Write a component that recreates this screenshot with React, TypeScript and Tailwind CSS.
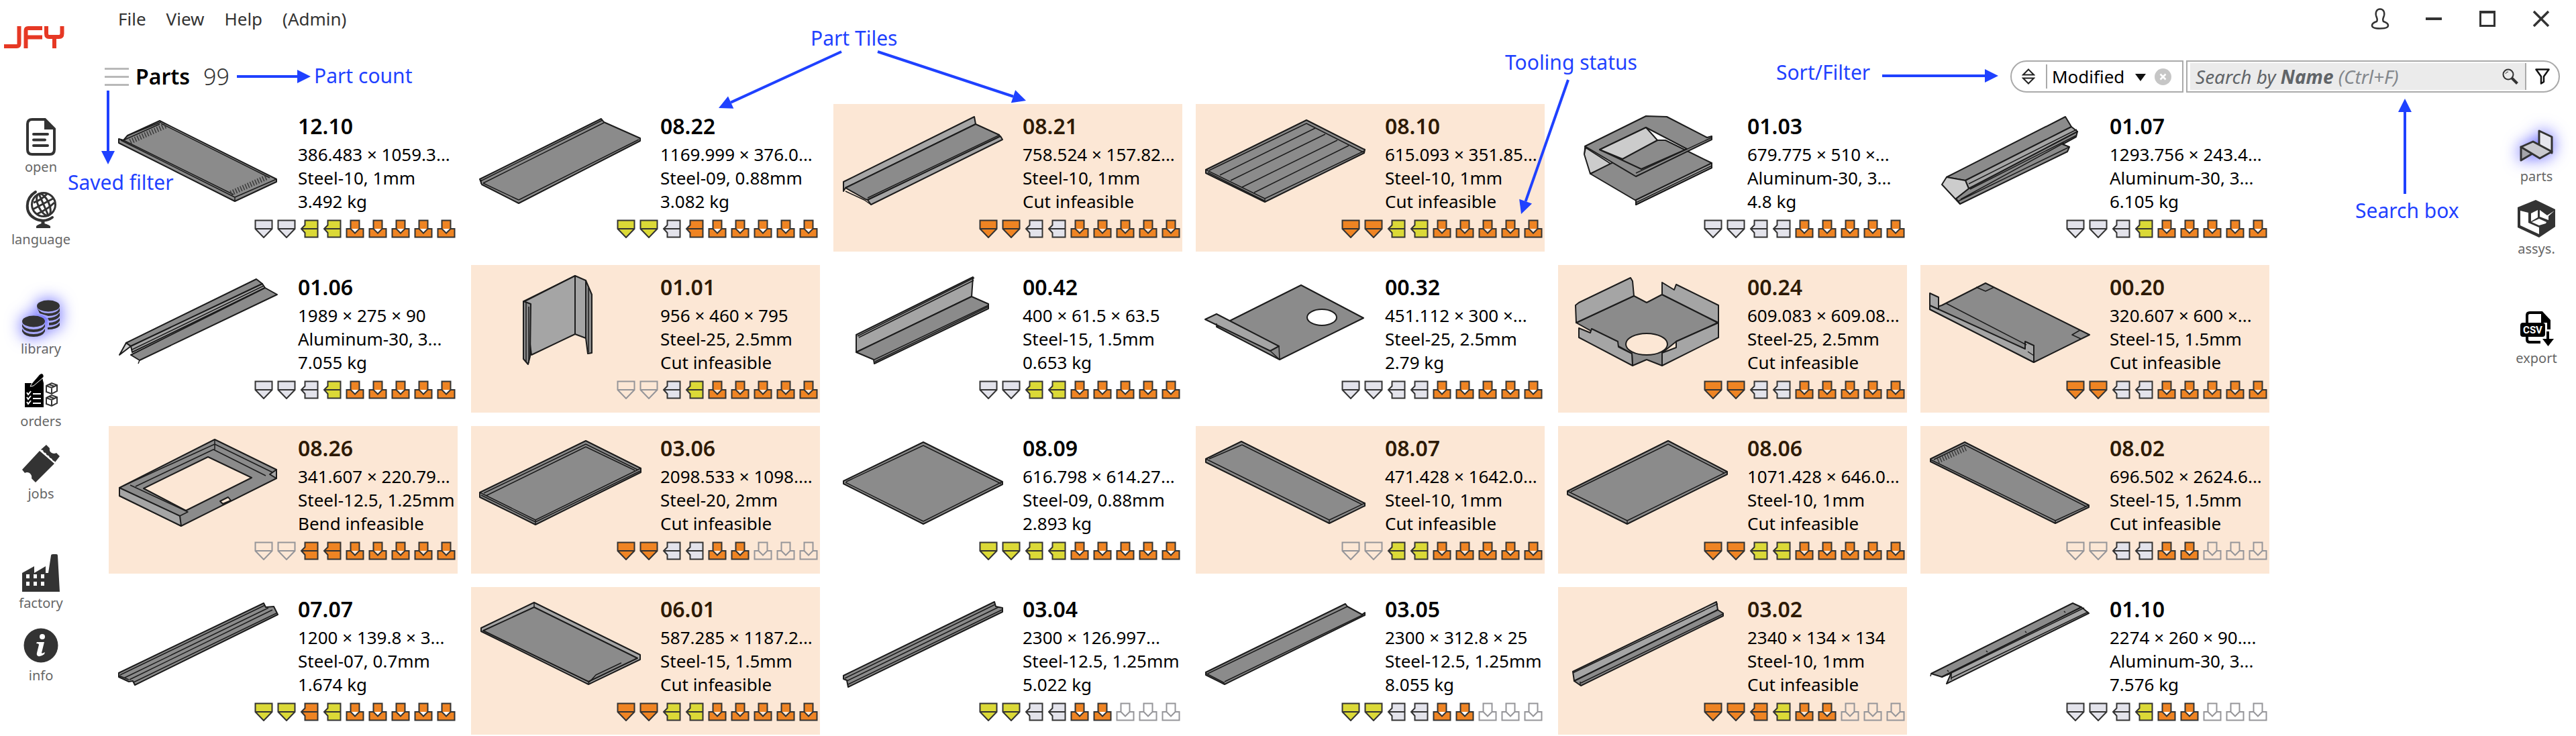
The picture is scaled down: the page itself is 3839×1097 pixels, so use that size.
import type { ReactNode } from "react";

type Shape = [fill: "d" | "m" | "l" | "n" | "h", path: string];

type Part = {
  name: string;
  lines: [string, string, string];
  tools: string;
  shapes: Shape[];
};

const PART_FILL = { d: "#8b8b8b", m: "#a5a5a5", l: "#cccccc", n: "none", h: "none" };

const PARTS: Part[] = [
  {
    name: "12.10",
    lines: ["386.483 × 1059.3...", "Steel-10, 1mm", "3.492 kg"],
    tools: "ggyyooooo",
    shapes: [
      ["d", "M76 25 250 112 250 116 188 145 15 58 15 52 22 54 28 47Z"],
      ["n", "M28 47 78 27M18 54 188 139 250 112M22 54 186 135M78 29 240 110M188 139V145M22 54 76 30"],
      ["h", "M32 56 86 32M182 133 236 109"],
    ],
  },
  {
    name: "08.22",
    lines: ["1169.999 × 376.0...", "Steel-09, 0.88mm", "3.082 kg"],
    tools: "yygoooooo",
    shapes: [
      ["d", "M194 22 198 27 252 51 252 55 71 148 16 120 13 112Z"],
      ["n", "M14 115 196 24M18 118 198 28M71 143 250 53M71 143 18 118M15 113V119"],
    ],
  },
  {
    name: "08.21",
    lines: ["758.524 × 157.82...", "Steel-10, 1mm", "Cut infeasible"],
    tools: "ooggooooo",
    shapes: [
      ["m", "M210 19 212 30 18 125 15 130 15 116Z"],
      ["d", "M212 30 247 46 249 50 51 143 48 142 18 125Z"],
      ["m", "M249 48 252 53 56 150 51 143Z"],
      ["n", "M51 140 248 46M18 130 46 143 56 150"],
    ],
  },
  {
    name: "08.10",
    lines: ["615.093 × 351.85...", "Steel-10, 1mm", "Cut infeasible"],
    tools: "ooyyooooo",
    shapes: [
      ["d", "M165 24 252 68 251 73 103 146 15 103 15 98Z"],
      ["n", "M20 99 165 29 250 72M15 98 103 141 251 70M103 141V146M178 36 36 106M193 45 52 114M211 54 69 124M228 62 87 132M18 102 102 144"],
    ],
  },
  {
    name: "01.03",
    lines: ["679.775 × 510 ×...", "Aluminum-30, 3...", "4.8 kg"],
    tools: "ggggooooo",
    shapes: [
      ["l", "M41 65 80 90 48 104 39 75Z"],
      ["d", "M48 104 148 54 160 54 229 88 229 95 116 150 116 144Z"],
      ["m", "M229 88 229 95 116 150 116 143Z"],
      ["n", "M116 147 229 92"],
      ["d", "M131 18 162 19 222 50 229 48 229 53 116 108 40 63ZM131 35 62 68 124 97 192 67Z"],
      ["l", "M131 35 148 54 96 82 62 68Z"],
      ["n", "M116 103 229 50M40 63 39 75"],
    ],
  },
  {
    name: "01.07",
    lines: ["1293.756 × 243.4...", "Aluminum-30, 3...", "6.105 kg"],
    tools: "gggyooooo",
    shapes: [
      ["d", "M234 41 232 49 212 60 222 64 219 71 59 149 53 141 72 126Z"],
      ["d", "M216 19 225 34 67 114 39 109Z"],
      ["m", "M225 34 234 41 72 126 67 114Z"],
      ["l", "M39 109 67 114 72 126 53 141 59 149 32 120Z"],
      ["n", "M72 119 233 38M74 127 232 47M60 142 214 58M56 145 222 64"],
    ],
  },
  {
    name: "01.06",
    lines: ["1989 × 275 × 90", "Aluminum-30, 3...", "7.055 kg"],
    tools: "gggyooooo",
    shapes: [
      ["l", "M26 116 33 121 16 134Z"],
      ["d", "M220 21 229 28 33 121 26 116Z"],
      ["m", "M229 28 233 34 35 130 33 121Z"],
      ["d", "M233 34 251 44 46 142 33 134Z"],
      ["n", "M35 126 231 31M46 142 44 147"],
    ],
  },
  {
    name: "01.01",
    lines: ["956 × 460 × 795", "Steel-25, 2.5mm", "Cut infeasible"],
    tools: "nngyooooo",
    shapes: [
      ["m", "M155 16 155 103 90 134 80 54Z"],
      ["m", "M155 16 171 23 171 109 155 103Z"],
      ["d", "M171 23 180 44 180 131 174 132 171 109Z"],
      ["d", "M78 54 89 58 88 136 85 148 78 140Z"],
      ["n", "M82 56V144M86 62V146M175 34V130M78 54 155 16"],
    ],
  },
  {
    name: "00.42",
    lines: ["400 × 61.5 × 63.5", "Steel-15, 1.5mm", "0.653 kg"],
    tools: "ggyyooooo",
    shapes: [
      ["m", "M208 18 206 47 34 130 34 104Z"],
      ["d", "M206 47 231 58 231 65 61 147 60 141 34 130Z"],
      ["n", "M38 108 209 23M36 106 210 19M61 141 231 60M62 144 231 62"],
    ],
  },
  {
    name: "00.32",
    lines: ["451.112 × 300 ×...", "Steel-25, 2.5mm", "2.79 kg"],
    tools: "ggggooooo",
    shapes: [
      ["d", "M157 30 250 79 125 141 31 92 53 82ZM166 78A22 12 0 1 0 210 78A22 12 0 1 0 166 78Z"],
      ["m", "M14 81 31 73 124 121 111 128Z"],
      ["n", "M31 87V92M124 121 125 141 111 128"],
    ],
  },
  {
    name: "00.24",
    lines: ["609.083 × 609.08...", "Steel-25, 2.5mm", "Cut infeasible"],
    tools: "ooggooooo",
    shapes: [
      ["d", "M113 46 132 56 155 44 238 86 176 114 155 131 155 150 132 141 111 150 110 132 27 86ZM101 118A31 16 0 1 0 163 118A31 16 0 1 0 101 118Z"],
      ["m", "M27 86 26 60 31 56 108 19 111 24 113 46Z"],
      ["m", "M155 44 155 26 173 37 176 29 239 60 239 86Z"],
      ["m", "M31 94 48 101 50 95 89 114 90 122 110 132 111 150 31 108Z"],
      ["m", "M239 86 239 108 155 150 155 131 176 123 176 114Z"],
    ],
  },
  {
    name: "00.20",
    lines: ["320.607 × 600 ×...", "Steel-15, 1.5mm", "Cut infeasible"],
    tools: "ooggooooo",
    shapes: [
      ["d", "M97 27 252 104 169 145 14 66 32 60Z"],
      ["m", "M14 60 156 125 156 114 169 120 169 145 14 66Z"],
      ["m", "M14 42 27 48 27 66 14 60Z"],
      ["n", "M83 33 97 39 110 33M238 97 226 104 239 110M38 57 158 119M160 129 169 135"],
    ],
  },
  {
    name: "08.26",
    lines: ["341.607 × 220.79...", "Steel-12.5, 1.25mm", "Bend infeasible"],
    tools: "nnooooooo",
    shapes: [
      ["d", "M158 20 250 65 250 78 108 149 16 104 16 92ZM148 46 213 77 115 126 52 93ZM166 112 178 106 182 111 170 116Z"],
      ["m", "M16 92 106 134 108 149 16 104Z"],
      ["m", "M250 65 250 78 240 72Z"],
      ["n", "M22 89 158 27 244 69M40 90 156 35 234 74M106 134 118 128 32 88M158 20V35"],
    ],
  },
  {
    name: "03.06",
    lines: ["2098.533 × 1098....", "Steel-20, 2mm", "Cut infeasible"],
    tools: "ooggoonnn",
    shapes: [
      ["d", "M171 22 253 63 253 69 96 147 13 106 13 99Z"],
      ["n", "M13 99 96 140 253 63M19 100 171 27 248 65M22 104 171 31 244 66M96 140V147M15 103 96 143 252 67"],
    ],
  },
  {
    name: "08.09",
    lines: ["616.798 × 614.27...", "Steel-09, 0.88mm", "2.893 kg"],
    tools: "yyyyooooo",
    shapes: [
      ["d", "M134 24 252 83 252 87 134 146 15 86 15 82Z"],
      ["n", "M19 83 134 29 250 86M18 84 134 142 252 83"],
    ],
  },
  {
    name: "08.07",
    lines: ["471.428 × 1642.0...", "Steel-10, 1mm", "Cut infeasible"],
    tools: "nnyyooooo",
    shapes: [
      ["d", "M68 23 252 115 252 119 199 145 15 54 15 49Z"],
      ["n", "M20 49 69 28 248 117M15 49 199 140 252 115M199 140V145"],
    ],
  },
  {
    name: "08.06",
    lines: ["1071.428 × 646.0...", "Steel-10, 1mm", "Cut infeasible"],
    tools: "ooyyooooo",
    shapes: [
      ["d", "M164 22 252 68 252 72 103 146 14 102 14 97Z"],
      ["n", "M19 98 164 27 248 70M14 97 103 141 252 68M103 141V146"],
    ],
  },
  {
    name: "08.02",
    lines: ["696.502 × 2624.6...", "Steel-15, 1.5mm", "Cut infeasible"],
    tools: "nnggoonnn",
    shapes: [
      ["d", "M66 24 251 118 251 121 201 145 15 53 15 49Z"],
      ["n", "M20 50 66 28 247 120M15 50 201 141 251 118M201 141V145"],
      ["h", "M26 52 68 33"],
    ],
  },
  {
    name: "07.07",
    lines: ["1200 × 139.8 × 3...", "Steel-07, 0.7mm", "1.674 kg"],
    tools: "yyoyooooo",
    shapes: [
      ["d", "M231 24 234 30 246 29 252 41 39 146 36 140 30 141 15 134 15 128Z"],
      ["n", "M17 131 233 27M24 135 238 31M31 138 244 34M37 142 250 39M15 132 30 138"],
    ],
  },
  {
    name: "06.01",
    lines: ["587.285 × 1187.2...", "Steel-15, 1.5mm", "Cut infeasible"],
    tools: "ooyyooooo",
    shapes: [
      ["m", "M94 23 252 101 252 108 175 145 15 66 15 61Z"],
      ["d", "M94 30 248 106 175 141 18 65Z"],
      ["n", "M94 23V30M175 140V145M176 142 186 131 224 113"],
    ],
  },
  {
    name: "03.04",
    lines: ["2300 × 126.997...", "Steel-12.5, 1.25mm", "5.022 kg"],
    tools: "yyggoonnn",
    shapes: [
      ["d", "M240 22 242 29 252 31 252 37 22 149 20 139 15 137 15 132Z"],
      ["n", "M17 136 241 26M20 140 246 30M22 145 251 34"],
    ],
  },
  {
    name: "03.05",
    lines: ["2300 × 312.8 × 25", "Steel-12.5, 1.25mm", "8.055 kg"],
    tools: "yyggoonnn",
    shapes: [
      ["d", "M223 25 226 29 248 41 252 38 252 42 43 145 15 131 15 127Z"],
      ["n", "M18 129 226 29M43 141 250 41M16 129 43 143"],
    ],
  },
  {
    name: "03.02",
    lines: ["2340 × 134 × 134", "Steel-10, 1mm", "Cut infeasible"],
    tools: "oooyoonnn",
    shapes: [
      ["m", "M236 22 238 34 24 140 22 126Z"],
      ["d", "M238 34 246 39 246 43 34 147 24 140Z"],
      ["n", "M22 128 238 25M34 143 246 40M33 141 33 147"],
    ],
  },
  {
    name: "01.10",
    lines: ["2274 × 260 × 90....", "Aluminum-30, 3...", "7.576 kg"],
    tools: "gggyoonnn",
    shapes: [
      ["d", "M227 24 240 30 32 134 16 129Z"],
      ["m", "M240 30 251 39 39 144 46 128 32 134Z"],
      ["n", "M40 131 244 31M45 136 250 37M16 129 15 133M46 128V138M214 36 216 38M156 66 158 68M98 95 100 97M40 124 42 126"],
    ],
  },
];

const TOOL_FILL: Record<string, string> = {
  o: "#ef8423",
  y: "#dbd937",
  g: "#e3e3eb",
  n: "none",
};

const TOOL_PATHS = {
  punch: "M1.5 1.5H26.5V14L14 27L1.5 14ZM1.5 14H26.5",
  side: "M7.5 1.5H26.5V26.5H7.5V20L2 14L7.5 8.5ZM2 14H26.5",
  die: "M7.5 1.5H20.5V14H26.5V26.5H1.5V14H7.5ZM7.5 14L14 20.5L20.5 14",
};

function ToolIcon({ code, index }: { code: string; index: number }) {
  const kind = index < 2 ? "punch" : index < 4 ? "side" : "die";
  return (
    <svg className="size-7" viewBox="0 0 28 28" aria-hidden="true">
      <path
        d={TOOL_PATHS[kind]}
        fill={TOOL_FILL[code]}
        stroke={code === "n" ? "#959599" : "#333333"}
        strokeWidth="2"
      />
    </svg>
  );
}

function PartShape({ shape: [fill, d] }: { shape: Shape }) {
  if (fill === "h") {
    return <path d={d} fill="none" stroke="#3a3a3a" strokeWidth="8" strokeDasharray="1.5 2.5" />;
  }
  return (
    <path
      d={d}
      fill={PART_FILL[fill]}
      fillRule="evenodd"
      stroke="#1c1c1c"
      strokeWidth={fill === "n" ? 1.5 : 2}
    />
  );
}

function Tile({ part }: { part: Part }) {
  const flagged = part.lines[2].includes("infeasible");
  return (
    <li className={flagged ? "flex h-[220px] bg-[#fce7d5]" : "flex h-[220px]"}>
      <div className="flex w-full flex-col">
        <div className="flex h-[172px]">
          <svg
            className="h-[172px] w-[264px] shrink-0"
            viewBox="0 0 264 172"
            strokeLinejoin="round"
            role="img"
            aria-label={"Part " + part.name}
          >
            {part.shapes.map((shape, i) => (
              <PartShape key={i} shape={shape} />
            ))}
          </svg>
          <div className="ml-[18px] min-w-0 whitespace-nowrap pt-2">
            <h2
              className={
                flagged
                  ? "text-[32px] leading-[50px] font-semibold text-[#2e1a05]"
                  : "text-[32px] leading-[50px] font-semibold text-black"
              }
            >
              {part.name}
            </h2>
            {part.lines.map((line) => (
              <p key={line} className="text-[26px] leading-[35px] text-black">
                {line}
              </p>
            ))}
          </div>
        </div>
        <div className="flex justify-end gap-[6px] pr-[3px]">
          {part.tools.split("").map((code, i) => (
            <ToolIcon key={i} code={code} index={i} />
          ))}
        </div>
      </div>
    </li>
  );
}

function RailButton({ label, active, children }: { label: string; active?: boolean; children: ReactNode }) {
  return (
    <button type="button" className="flex w-full flex-col items-center">
      <svg
        className={
          active
            ? "size-14 overflow-visible drop-shadow-[0_0_12px_#5a5aff]"
            : "size-14 overflow-visible"
        }
        viewBox="0 0 56 56"
        fill="#333333"
        aria-hidden="true"
      >
        {children}
      </svg>
      <span className="mt-[2px] text-[20px] leading-[30px] text-[#666666]">{label}</span>
    </button>
  );
}

function RailGroup({ children }: { children: ReactNode }) {
  return <div className="flex flex-col gap-5">{children}</div>;
}

function LeftRail() {
  return (
    <nav className="flex w-[122px] shrink-0 flex-col" aria-label="Main">
      <svg className="mt-[38px] ml-[6px] h-[35px] w-[90px]" viewBox="0 0 90 35" fill="none" stroke="#e63824" strokeWidth="6" role="img" aria-label="JFY">
        <path d="M0 31H19Q22.500 31 22.500 27V1" />
        <path d="M57 4H36Q32.500 4 32.500 8V34M34 17.500H57" />
        <path d="M63 1V12Q63 17 67 17H82Q86.500 17 86.500 12V1M75 17V34" />
      </svg>
      <div className="mt-[103px] flex flex-col gap-[75px]">
        <RailGroup>
          <RailButton label="open">
            <path d="M15 2H34L48 16V47Q48 54 41 54H15Q8 54 8 47V9Q8 2 15 2Z" fill="none" stroke="#333333" strokeWidth="4" />
            <path d="M33 1 49 17H33Z" />
            <path d="M17 24H38M17 32.500H34M17 41H38" fill="none" stroke="#333333" strokeWidth="4" strokeLinecap="round" />
          </RailButton>
          <RailButton label="language">
            <g fill="none" stroke="#333333" strokeWidth="3">
              <circle cx="32" cy="21" r="17.500" />
              <ellipse cx="32" cy="21" rx="8" ry="17.500" transform="rotate(-25 32 21)" />
              <path d="M25 5 39 37M16 28 46 12M17 18Q29 14 37 5M22 35Q38 28 48 18" />
              <path d="M20 2C4 12 4 33 18 41C26 46 37 46 45 40" strokeWidth="4" strokeLinecap="round" />
              <path d="M31 44V51" strokeWidth="5" />
            </g>
            <path d="M21 56V53Q26 49 31 49T42 53V56Z" />
          </RailButton>
        </RailGroup>
        <RailGroup>
          <RailButton label="library" active>
            <g>
              <path d="M22 9A17 8.500 0 0 1 56 9V38Q54 43 38 44V28Q30 21 22 21Z" fill="#a9a9ff" />
              <ellipse cx="39" cy="9" rx="17" ry="8.500" />
              <path d="M22 11Q26 20 39 20T56 12V17Q52 24 39 24L26 20ZM38 27Q50 27 56 19V24Q52 31 40 31ZM40 34Q50 34 56 27V31Q52 38 40 38ZM38 41Q50 41 56 34V38Q52 44 38 44Z" />
              <path d="M0 34V48Q4 55 17 55T34 48V34Z" fill="#a9a9ff" />
              <ellipse cx="17" cy="32" rx="17" ry="8.500" />
              <path d="M0 36Q4 44 17 44T34 36V40Q30 48 17 48T0 40ZM0 43Q4 51 17 51T34 43V47Q30 55 17 55T0 47Z" />
            </g>
          </RailButton>
          <RailButton label="orders">
            <path d="M5 16H15L22 8H30L32 16V52H4V16Z" fill="#000000" />
            <path d="M14 17 26 3Q30 0 32 4Q33 7 30 9L17 20L12 21Z" fill="#000000" stroke="#ffffff" strokeWidth="1" />
            <path d="M16 32H28M16 39H28M16 46H28M7 30 9 33 13 28M7 37 9 40 13 35M7 44 9 47 13 42" fill="none" stroke="#ffffff" strokeWidth="2" />
            <path d="M36 20 44 16 52 19V28L44 32 36 29ZM36 20 44 23 52 19M44 23V32M40 18 48 21M36 38 44 34 52 37V46L44 50 36 47ZM36 38 44 41 52 37M44 41V50M40 36 48 39" fill="none" stroke="#333333" strokeWidth="2" />
          </RailButton>
          <RailButton label="jobs">
            <path d="M36 0 41 5Q40 10 44 12Q48 14 51 12L56 17 49 26 28 7Z" />
            <path d="M26 9 48 28 20 56 14 50Q15 45 11 42Q7 40 4 42L0 37Z" />
            <path d="M29 8 49 27" stroke="#ffffff" strokeWidth="2" strokeDasharray="3 3" />
          </RailButton>
        </RailGroup>
        <RailGroup>
          <RailButton label="factory">
            <path fillRule="evenodd" d="M0 28 18 18V28L35 18V28H39L43 2Q43 0 46 0H51Q53 0 53 2L56 56H0ZM6 30V36H11V30ZM17 30V36H22V30ZM28 30V36H33V30ZM6 41V47H11V41ZM17 41V47H22V41ZM28 41V47H33V41Z" />
          </RailButton>
          <RailButton label="info">
            <circle cx="28" cy="28" r="25.500" />
            <circle cx="30" cy="15" r="4" fill="#ffffff" />
            <path d="M22 23H33L29 39Q29 41 34 38L33 41Q28 45 24 44Q21 43 22 39L25 27Q25 25 21 25Z" fill="#ffffff" />
          </RailButton>
        </RailGroup>
      </div>
    </nav>
  );
}

function RightRail() {
  return (
    <nav className="flex w-[118px] shrink-0 flex-col gap-[75px] pt-[35px]" aria-label="Library">
      <RailGroup>
        <RailButton label="parts" active>
          <g stroke="#333333" strokeWidth="3" strokeLinejoin="round">
            <path d="M32 5 51 14V38L32 28Z" fill="#e6e6ee" />
            <path d="M5 29V49L22 39Z" fill="#a5a5aa" />
            <path d="M5 29 23 21 51 36 33 46Z" fill="#c9c9cf" />
          </g>
        </RailButton>
        <RailButton label="assys.">
          <path d="M0 11 27 0 56 14V40L32 56 0 41Z" />
          <path d="M4 16 16 19V34L32 41V51L4 38Z" fill="#ffffff" />
          <path d="M20 20 30 15V26L20 32Z" fill="#ffffff" />
          <path d="M33 15 44 23 55 16 46 24V30L33 25Z" fill="#ffffff" />
          <path d="M21 33 32 28 43 33 42 35 32 38Z" fill="#ffffff" />
        </RailButton>
      </RailGroup>
      <RailGroup>
        <RailButton label="export">
          <path d="M14 20V9Q14 5 18 5H36L46 16V30" fill="none" stroke="#000000" strokeWidth="4" />
          <path d="M35 3 49 16V30H44V20H35Z" fill="#000000" />
          <rect x="4" y="20" width="37" height="21" rx="4" fill="#000000" />
          <path d="M14 40V45Q14 49 18 49H34M45 33V46" fill="none" stroke="#000000" strokeWidth="4" />
          <path d="M37 44H54L45.500 55Z" fill="#000000" />
          <text x="22.500" y="36" textAnchor="middle" fill="#ffffff" fontSize="15" fontWeight="700" fontFamily="Roboto, sans-serif">
            CSV
          </text>
        </RailButton>
      </RailGroup>
    </nav>
  );
}

function TopBar() {
  return (
    <header className="flex h-14 items-center justify-between pr-[38px]">
      <nav className="flex gap-[30px] pl-[54px] text-[26px] leading-9 text-[#333333]" aria-label="Menu">
        <button type="button">File</button>
        <button type="button">View</button>
        <button type="button">Help</button>
        <button type="button">(Admin)</button>
      </nav>
      <div className="flex items-center gap-[52px]">
        <button type="button" aria-label="User">
          <svg className="h-8 w-7" viewBox="0 0 28 32" fill="none" stroke="#333333" strokeWidth="2.500">
            <path d="M14 1.500C9 1.500 7 6 8 11C9 15 11 17 9 20C6 21 2 22 2 26C2 29 6 30.500 14 30.500S26 29 26 26C26 22 22 21 19 20C17 17 19 15 20 11C21 6 19 1.500 14 1.500Z" />
          </svg>
        </button>
        <button type="button" aria-label="Minimize">
          <svg className="size-7" viewBox="0 0 28 28" stroke="#333333" strokeWidth="4">
            <path d="M2 14H26" />
          </svg>
        </button>
        <button type="button" aria-label="Maximize">
          <svg className="size-7" viewBox="0 0 28 28" fill="none" stroke="#333333" strokeWidth="3">
            <path d="M3.500 3.500H24.500V24.500H3.500Z" />
            <path d="M2 4H26" strokeWidth="4" />
          </svg>
        </button>
        <button type="button" aria-label="Close">
          <svg className="size-7" viewBox="0 0 28 28" stroke="#333333" strokeWidth="3.500">
            <path d="M3 3 25 25M25 3 3 25" />
          </svg>
        </button>
      </div>
    </header>
  );
}

function TitleRow() {
  return (
    <div className="mt-[34px] flex h-12 items-center pr-6 pl-[34px]">
      <button type="button" aria-label="Saved filter" className="flex w-9 flex-col gap-[9px]">
        <span className="h-[3px] bg-[#b9b9b9]" />
        <span className="h-[3px] bg-[#b9b9b9]" />
        <span className="h-[3px] bg-[#b9b9b9]" />
      </button>
      <h1 className="ml-[10px] text-[32px] leading-[46px] font-semibold text-black">Parts</h1>
      <span className="ml-5 text-[34px] leading-[46px] font-light text-[#333333]">99</span>

      <div className="ml-auto flex h-12 w-[258px] items-center rounded-l-full border-2 border-[#aaaaaa] bg-white pl-[15px] pr-4">
        <button type="button" aria-label="Toggle sort direction">
          <svg className="h-6 w-5" viewBox="0 0 20 24" fill="none" stroke="#222222" strokeWidth="2">
            <path d="M10 1.500 18 9.500H2ZM10 22.500 18 14.500H2Z" />
          </svg>
        </button>
        <span className="ml-4 h-9 w-[2px] bg-[#aaaaaa]" />
        <div className="relative ml-[7px]">
          <select aria-label="Sort by" className="block w-[140px] appearance-none bg-transparent text-[26px] leading-9 text-black">
            <option>Modified</option>
          </select>
          <svg className="pointer-events-none absolute top-[14px] right-0 h-[11px] w-4" viewBox="0 0 16 11" aria-hidden="true">
            <path d="M0 0H16L8 11Z" fill="#111111" />
          </svg>
        </div>
        <button type="button" aria-label="Clear sort" className="ml-auto">
          <svg className="size-[25px]" viewBox="0 0 25 25">
            <circle cx="12.500" cy="12.500" r="12.500" fill="#c6c6c6" />
            <path d="M8.500 8.500 16.500 16.500M16.500 8.500 8.500 16.500" stroke="#ffffff" strokeWidth="2.500" />
          </svg>
        </button>
      </div>

      <div className="ml-1 flex h-12 w-[557px] items-center rounded-r-full border-2 border-[#aaaaaa] bg-white py-[2px] pr-[13px] pl-1">
        <div className="relative flex h-full flex-1 items-center bg-[#ebebeb] pr-[10px]">
          <label htmlFor="search" className="pointer-events-none absolute left-2 whitespace-nowrap text-[28px] leading-9 text-[#606468] italic">
            Search by <b className="font-bold">Name</b> <span className="text-[#83878c]">(Ctrl+F)</span>
          </label>
          <input id="search" type="text" className="h-full w-full bg-transparent px-2 text-[28px] outline-none" />
          <svg className="size-6 shrink-0" viewBox="0 0 24 24" fill="none" stroke="#333333" aria-hidden="true">
            <circle cx="9" cy="9" r="7.500" strokeWidth="2" />
            <path d="M14 14 22.500 22.500" strokeWidth="4" />
            <path d="M5 8Q6 5 9 5" strokeWidth="1" />
          </svg>
        </div>
        <span className="h-full w-[2px] bg-[#aaaaaa]" />
        <button type="button" aria-label="Filter" className="ml-[13px]">
          <svg className="h-6 w-[22px]" viewBox="0 0 22 24" fill="none" stroke="#111111" strokeWidth="2.500" strokeLinejoin="round">
            <path d="M1.500 1.500H20.500L13 12V20L9 22.500V12Z" />
          </svg>
        </button>
      </div>
    </div>
  );
}

type CalloutLine = { from: [number, number]; to: [number, number] };

function arrowHead({ from, to }: CalloutLine) {
  const dx = to[0] - from[0];
  const dy = to[1] - from[1];
  const length = Math.hypot(dx, dy);
  const ux = dx / length;
  const uy = dy / length;
  const bx = to[0] - ux * 20;
  const by = to[1] - uy * 20;
  return {
    shaft: `M${from[0]} ${from[1]}L${bx} ${by}`,
    head: `M${to[0]} ${to[1]}L${bx - uy * 10} ${by + ux * 10}L${bx + uy * 10} ${by - ux * 10}Z`,
  };
}

function Arrows({ lines }: { lines: CalloutLine[] }) {
  return (
    <svg className="absolute inset-0 h-px w-px overflow-visible" aria-hidden="true">
      {lines.map((line, i) => {
        const arrow = arrowHead(line);
        return (
          <g key={i}>
            <path d={arrow.shaft} stroke="#1f41ff" strokeWidth="4" />
            <path d={arrow.head} fill="#1f41ff" />
          </g>
        );
      })}
    </svg>
  );
}

function Callouts() {
  return (
    <div className="pointer-events-none text-[30px] leading-10 whitespace-nowrap text-[#1f41ff]">
      <div className="absolute top-0 left-0">
        <Arrows
          lines={[
            { from: [353, 114], to: [463, 114] },
            { from: [161, 135], to: [161, 245] },
            { from: [1254, 77], to: [1071, 161] },
            { from: [1308, 77], to: [1529, 150] },
            { from: [2337, 119], to: [2267, 319] },
          ]}
        />
        <span className="absolute top-[93px] left-[468px]">Part count</span>
        <span className="absolute top-[252px] left-[101px]">Saved filter</span>
        <span className="absolute top-[37px] left-[1208px]">Part Tiles</span>
        <span className="absolute top-[73px] left-[2243px]">Tooling status</span>
      </div>
      <div className="absolute top-0 right-[1239px]">
        <Arrows
          lines={[
            { from: [205, 113], to: [378, 113] },
            { from: [984, 289], to: [984, 147] },
          ]}
        />
        <span className="absolute top-[88px] left-[47px]">Sort/Filter</span>
        <span className="absolute top-[294px] left-[910px]">Search box</span>
      </div>
    </div>
  );
}

export default function App() {
  return (
    <div className="relative flex overflow-hidden bg-white font-['Noto_Sans','Open_Sans',sans-serif]">
      <LeftRail />
      <div className="flex min-w-0 flex-1 flex-col">
        <TopBar />
        <TitleRow />
        <div className="mt-[17px] flex">
          <main className="min-w-0 flex-1 pl-10">
            <ul className="grid grid-cols-[repeat(auto-fill,520px)] gap-5">
              {PARTS.map((part) => (
                <Tile key={part.name} part={part} />
              ))}
            </ul>
          </main>
          <RightRail />
        </div>
      </div>
      <Callouts />
    </div>
  );
}
